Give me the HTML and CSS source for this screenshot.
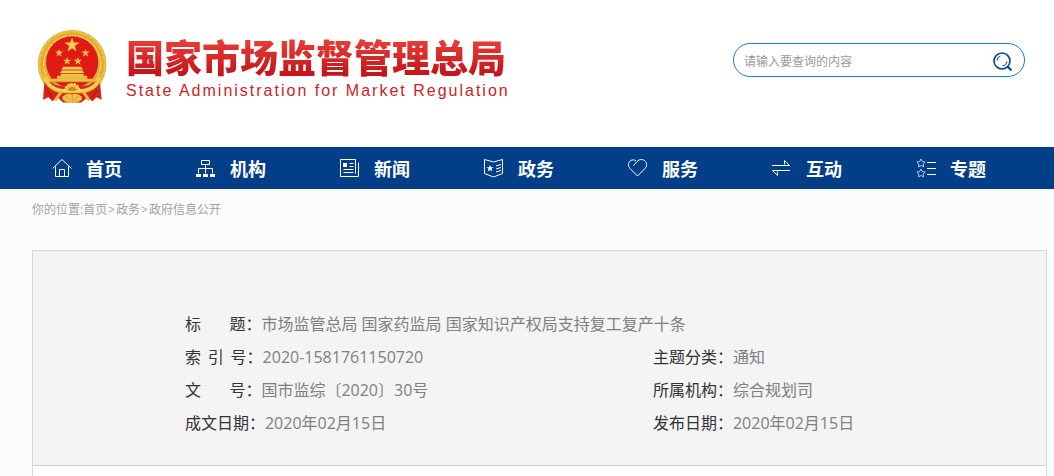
FILE: index.html
```html
<!DOCTYPE html>
<html lang="zh-CN">
<head>
    <meta charset="utf-8">
    <title>国家市场监督管理总局</title>
    <link rel="stylesheet" href="styles.css">
</head>
<body>
<!-- 头部：徽标、名称、搜索 -->
<div class="header">
    <div class="logo">
        <svg class="emblem" viewBox="20 28 212 216" aria-hidden="true">
            <circle cx="125" cy="128" r="88" fill="none" stroke="#e2ad30" stroke-width="29"/>
            <circle cx="125" cy="128" r="98" fill="none" stroke="#ecc44c" stroke-width="6" stroke-dasharray="16 3"/>
            <circle cx="125" cy="128" r="85" fill="none" stroke="#f4d463" stroke-width="4" stroke-dasharray="22 4"/>
            <circle cx="125" cy="122" r="78" fill="#e01b17"/>
            <path d="M42 180 Q56 174 76 190 L125 200 L176 190 Q194 174 208 180 L213 234 L198 226 L186 238 L170 228 L152 242 L98 242 L82 228 L66 238 L54 226 L38 234Z" fill="#d5241c"/>
            <path d="M40 164 Q60 208 102 208 L148 208 Q192 208 212 164" fill="none" stroke="#efbd3d" stroke-width="13"/>
            <path d="M42 168 Q62 207 102 206 M208 168 Q190 207 148 206" fill="none" stroke="#f8dc70" stroke-width="3"/>
            <path d="M50 204 L66 230 M200 204 L184 230" stroke="#b01714" stroke-width="3"/>
            <path d="M92 210 L74 236 M158 210 L176 236" stroke="#efbd3d" stroke-width="9"/>
            <path d="M125 48l5 15h17l-14 10 5 17-13-10-14 10 5-17-14-10h17z" fill="#f5cc50"/>
            <path id="star" d="M86 82l3 8h9l-7 6 3 9-8-5-8 5 3-9-7-6h9z" fill="#f0bd45"/>
            <use href="#star" x="79" y="0"/>
            <use href="#star" x="24" y="24"/>
            <use href="#star" x="56" y="24"/>
            <path d="M98 135h54l5 9H93z M94 146h62l5 9H89z M91 157h68v11H91z" fill="#f5cc50"/>
            <path d="M80 162h90v10H80z M66 171h118v10H66z" fill="#efbd3d"/>
            <path d="M94 145h62M90 156h70M66 181h118" stroke="#b56e16" stroke-width="2"/>
            <path d="M102 208 A23 22 0 0 1 148 208Z" fill="#efbd3d" stroke="#f8dc70" stroke-width="5" stroke-dasharray="7 3"/>
            <path d="M113 207 A12 11 0 0 1 137 207Z" fill="#c98a1d"/>
            <path d="M96 224 Q112 212 125 218 Q138 212 154 224 Q156 238 140 240 Q125 246 110 240 Q94 238 96 224Z" fill="#f0c348"/>
            <path d="M104 226 Q112 222 118 236 M146 226 Q138 222 132 236 M125 219 V240" fill="none" stroke="#c98a1d" stroke-width="2"/>
        </svg>
        <div class="name">
            <h1>国家市场监督管理总局</h1>
            <p>State Administration for Market Regulation</p>
        </div>
    </div>
    <form class="search">
        <input type="text" placeholder="请输入要查询的内容" aria-label="请输入要查询的内容">
        <button type="button" aria-label="搜索">
            <svg viewBox="0 0 20 20">
                <circle cx="10" cy="10" r="8" stroke-width="1.6"/>
                <path d="M15.500 15.500l4 4" stroke-width="2.2"/>
                <path d="M5 9.500a5 5 0 0 1 3.500-4.500M15 10.500a5 5 0 0 1-4.500 4.500" stroke-width="1"/>
            </svg>
        </button>
    </form>
</div>
<!-- 主导航 -->
<div class="nav">
    <ul>
        <li><a href="#"><svg viewBox="0 0 20 20"><path d="M.5 10.500L10 1.500l9.500 9M3.500 8.500v10h13v-10M7.500 18.500v-7h5v7"/></svg>首页</a></li>
        <li><a href="#"><svg viewBox="0 0 20 20"><path d="M5.500 2.500h8v4h-8zM9.500 6.500v9M2.500 15.500v-5h14v5"/><path class="fill" d="M0 16h5v3H0zM7 16h5v3H7zM14 16h5v3h-5z"/></svg>机构</a></li>
        <li><a href="#"><svg viewBox="0 0 20 20"><path d="M15.500 15.500v-14h-15v17h18v-14M9.500 5.500h4M9.500 8.500h4M3.500 11.500h10M3.500 14.500h10"/><path class="fill" d="M3 5h4v4H3z"/></svg>新闻</a></li>
        <li><a href="#"><svg viewBox="0 0 20 20"><path d="M.5 1.500l9 2.500 9-2.500v14l-9 3.500-9-3.500zM12 8l5-1.500M12 11l5-1.500M12 14l5-1.500"/><path class="fill" d="M6 7l1 2.200h2.500l-2 1.600.8 2.600L6 12l-2.300 1.400.8-2.600-2-1.600H5z"/></svg>政务</a></li>
        <li><a href="#"><svg viewBox="0 0 20 20"><path d="M5.500 7.500l3.500-4c3-3 6-2 7.500-1 3 2.500 2.500 6 .5 8l-7.500 7.500L2 10.500C0 8 0 5 2 3c2-1.500 4.500-1.500 6 0"/></svg>服务</a></li>
        <li><a href="#"><svg viewBox="0 0 20 20"><path d="M0 7.500h17.500l-5-5v4M18 12.500H.5l5 5v-4"/></svg>互动</a></li>
        <li><a href="#"><svg viewBox="0 0 20 20"><path d="M11 4.500h9M11 10.500h9M11 16.500h9"/><path class="thin" d="M5 1l1.300 2.600 2.900.4-2.100 2 .5 2.900L5 7.500 2.400 8.900l.5-2.900-2.100-2 2.900-.4zM5 11l1.300 2.600 2.900.4-2.100 2 .5 2.900L5 17.500l-2.600 1.400.5-2.900-2.100-2 2.900-.4z"/></svg>专题</a></li>
    </ul>
</div>
<!-- 当前位置 -->
<div class="position">你的位置:<a href="#">首页</a><span>&gt;</span><a href="#">政务</a><span>&gt;</span><a href="#">政府信息公开</a></div>
<!-- 文件信息 -->
<div class="content">
    <dl class="info">
        <div class="full"><dt>标&emsp;&nbsp;&nbsp;&nbsp;题：</dt><dd>市场监管总局 国家药监局 国家知识产权局支持复工复产十条</dd></div>
        <div><dt>索&nbsp;&thinsp;引&nbsp;&thinsp;号：</dt><dd>2020-1581761150720</dd></div>
        <div><dt>主题分类：</dt><dd>通知</dd></div>
        <div><dt>文&emsp;&nbsp;&nbsp;&nbsp;号：</dt><dd>国市监综〔2020〕30号</dd></div>
        <div><dt>所属机构：</dt><dd>综合规划司</dd></div>
        <div><dt>成文日期：</dt><dd>2020年02月15日</dd></div>
        <div><dt>发布日期：</dt><dd>2020年02月15日</dd></div>
    </dl>
    <div class="article"></div>
</div>
</body>
</html>
```
FILE: styles.css
```css
*{margin: 0;padding: 0;list-style: none;box-sizing: border-box;}
body{background-color: #fcfcfc;font-family: "Open Sans","Noto Sans CJK SC",sans-serif;font-size: 16px;}
a{color: inherit;text-decoration: none;}
/*头部样式*/
.header{display: flex;justify-content: space-between;align-items: flex-start;padding: 30px 29px 43px 37px;background-color: #fff;}
.logo{display: flex;align-items: center;gap: 18px;}
.emblem{display: block;width: 71px;height: 74px;}
.name h1{font-size: 38px;line-height: 48px;font-weight: 900;background: linear-gradient(#e63a36 20%,#c4161a 85%);-webkit-background-clip: text;background-clip: text;color: transparent;}
.name p{font-family: "Liberation Sans",sans-serif;font-size: 16px;line-height: 20px;letter-spacing: 2px;color: #cf2226;}
.search{display: flex;align-items: center;width: 292px;height: 34px;margin-top: 13px;padding: 2px 12px 0 10px;border: 1px solid #1a7bc8;border-radius: 17px;background-color: #fff;}
.search input{flex: 1;min-width: 0;border: 0;outline: 0;background: none;font-family: inherit;font-size: 12px;color: #333;}
.search input::placeholder{color: #999;}
.search button{width: 20px;height: 20px;border: 0;background: none;cursor: pointer;}
.search svg{display: block;width: 20px;height: 20px;fill: none;stroke: #0b438b;}
/*导航样式*/
.nav{background-color: #023f88;}
.nav ul{display: flex;padding: 0 26px 0 20px;}
.nav li{flex: 1;padding-left: 32px;}
.nav a{display: flex;align-items: center;gap: 14px;height: 42px;font-size: 18px;font-weight: bold;color: #fff;}
.nav svg{width: 20px;height: 20px;overflow: visible;fill: none;stroke: #fff;stroke-width: 1;}
.nav .fill{fill: #fff;stroke: none;}
.nav .thin{stroke-width: .7;}
/*当前位置*/
.position{padding: 1px 32px 0;font-size: 12px;line-height: 40px;color: #9ba3b0;}
.position span{margin: 0 1px;}
/*文件信息*/
.content{margin: 20px 7px 0 32px;border: 1px solid #cfdbea;border-bottom: 0;background-color: #fff;}
.info{display: grid;grid-template-columns: 66% 34%;padding: 57px 15% 25px;border-bottom: 1px solid #d0d0d0;background-color: #f4f4f4;}
.info div{display: flex;line-height: 33px;white-space: nowrap;}
.info .full{grid-column: 1 / 3;}
.info dt{color: #333;}
.info dd{color: #808080;}
.article{min-height: 10px;}
```
